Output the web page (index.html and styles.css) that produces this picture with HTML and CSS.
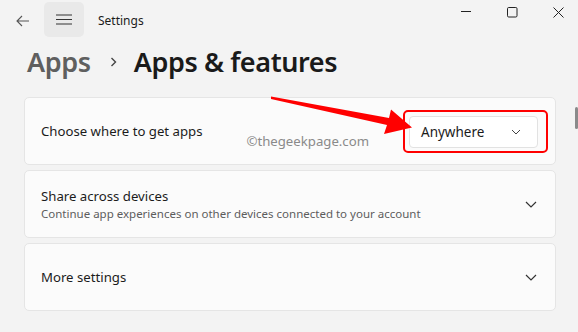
FILE: index.html
```html
<!DOCTYPE html>
<html lang="en">
<head>
  <meta charset="UTF-8">
  <title>Settings - Apps &amp; features</title>
  <link rel="stylesheet" href="styles.css">
</head>
<body>

<div class="window">
  <div class="titlebar">
    <div class="nav">
      <span class="back">
        <svg width="14" height="12" viewBox="0 0 14 12"><path d="M6 1 L1 6 L6 11 M1 6 H13" fill="none" stroke="#555" stroke-width="1.1"/></svg>
      </span>
      <span class="menu-btn">
        <svg width="16" height="11" viewBox="0 0 16 11"><path d="M0 1 H16 M0 5.5 H16 M0 10 H16" stroke="#333" stroke-width="1.1"/></svg>
      </span>
      <span class="app-name">Settings</span>
    </div>
    <div class="controls">
      <span class="ctl"><svg width="11" height="11" viewBox="0 0 11 11"><path d="M0 4.5 H10" stroke="#222" stroke-width="1"/></svg></span>
      <span class="ctl"><svg width="11" height="11" viewBox="0 0 11 11"><rect x="0.5" y="0.5" width="9.5" height="9.5" rx="1.2" fill="none" stroke="#222" stroke-width="1"/></svg></span>
      <span class="ctl"><svg width="11" height="11" viewBox="0 0 11 11"><path d="M0.5 0.5 L10.5 10.5 M10.5 0.5 L0.5 10.5" stroke="#222" stroke-width="1"/></svg></span>
    </div>
  </div>

  <h1 class="crumbs">
    <span class="parent">Apps</span>
    <svg class="sep" width="8" height="10" viewBox="0 0 8 10"><path d="M1.5 1 L5.5 5 L1.5 9" fill="none" stroke="#444" stroke-width="1.4"/></svg>
    <span class="current">Apps &amp; features</span>
  </h1>

  <div class="cards">
    <div class="card">
      <div class="label">
        <div class="title">Choose where to get apps</div>
      </div>
      <div class="mark">©thegeekpage.com</div>
      <div class="highlight">
        <div class="dropdown">
          <span>Anywhere</span>
          <svg width="10" height="6" viewBox="0 0 10 6"><path d="M1 1 L5 5 L9 1" fill="none" stroke="#444" stroke-width="1"/></svg>
        </div>
      </div>
    </div>

    <div class="card">
      <div class="label">
        <div class="title">Share across devices</div>
        <div class="sub">Continue app experiences on other devices connected to your account</div>
      </div>
      <svg class="chev" width="12" height="7" viewBox="0 0 12 7"><path d="M1 1 L6 6 L11 1" fill="none" stroke="#333" stroke-width="1.2"/></svg>
    </div>

    <div class="card">
      <div class="label">
        <div class="title">More settings</div>
      </div>
      <svg class="chev" width="12" height="7" viewBox="0 0 12 7"><path d="M1 1 L6 6 L11 1" fill="none" stroke="#333" stroke-width="1.2"/></svg>
    </div>
  </div>

  <div class="scrollbar"></div>

  <svg class="arrow" width="578" height="332" viewBox="0 0 578 332">
    <polygon points="271,96.5 389,118 391,109.5 412,127.5 384,134 387,125 271,99" fill="#f00"/>
  </svg>
</div>

</body>
</html>
```

FILE: styles.css
```css
* {
  box-sizing: border-box;
}
body {
  margin: 0;
  background: #f3f3f3;
  font-family: "Noto Sans", "Open Sans", sans-serif;
  color: #1b1b1b;
}
.window {
  width: 578px;
  height: 332px;
  overflow: hidden;
  position: relative;
}
.titlebar {
  height: 41px;
  display: flex;
  justify-content: space-between;
}
.nav {
  display: flex;
  align-items: center;
  padding-left: 16px;
}
.back {
  display: flex;
  width: 28px;
}
.menu-btn {
  width: 40px;
  height: 35px;
  margin-top: -3px;
  border-radius: 5px;
  background: #e9e9e9;
  display: flex;
  align-items: center;
  justify-content: center;
}
.app-name {
  margin-left: 14px;
  font-size: 12px;
  color: #1b1b1b;
}
.controls {
  display: flex;
  padding-top: 7px;
  margin-right: -3px;
}
.ctl {
  width: 46px;
  display: flex;
  justify-content: center;
}
.crumbs {
  margin: 0;
  padding-left: 27px;
  height: 40px;
  display: flex;
  align-items: center;
  font-size: 27px;
  font-weight: 600;
  letter-spacing: -0.4px;
}
.parent {
  color: #5f5f5f;
}
.sep {
  margin: 2px 16px 0 19px;
}
.current {
  color: #1a1a1a;
}
.cards {
  margin-top: 16px;
  width: 532px;
  margin-left: 24px;
  display: flex;
  flex-direction: column;
  gap: 5px;
}
.card {
  height: 68px;
  background: #fbfbfb;
  border: 1px solid #e5e5e5;
  border-radius: 5px;
  display: flex;
  align-items: center;
  padding: 0 18px 0 16px;
}
.label {
  flex: 1;
}
.title {
  font-size: 13.2px;
  color: #1b1b1b;
}
.sub {
  font-size: 11.5px;
  color: #5d5d5d;
  margin-top: 1px;
}
.mark {
  font-size: 13.2px;
  color: #8a8a8a;
  margin: 20px 34px 0 0;
}
.highlight {
  border: 2px solid #f00;
  border-radius: 5px;
  padding: 4px 8px 3px 4px;
  margin-right: -11px;
}
.dropdown {
  width: 129px;
  height: 32px;
  background: #fff;
  border: 1px solid #e2e2e2;
  border-radius: 4px;
  display: flex;
  align-items: center;
  justify-content: space-between;
  padding: 0 16px 0 11px;
  font-size: 13.5px;
}
.chev {
  margin-right: 0;
}
.scrollbar {
  position: absolute;
  right: 0;
  top: 107px;
  width: 3px;
  height: 22px;
  background: #8a8a8a;
  border-radius: 2px;
}
.arrow {
  position: absolute;
  left: 0;
  top: 0;
  pointer-events: none;
}
```
